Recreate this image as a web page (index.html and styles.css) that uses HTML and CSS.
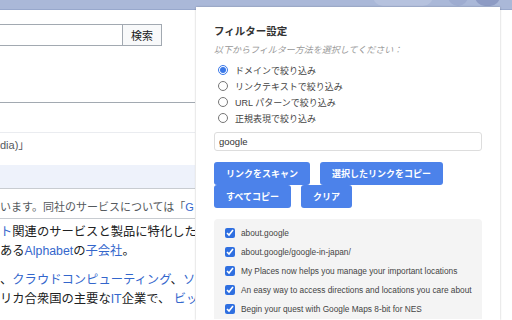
FILE: index.html
```html
<!DOCTYPE html>
<html lang="ja">
<head>
    <meta charset="UTF-8" />
    <meta name="viewport" content="width=device-width, initial-scale=1.0">
    <title>フィルター設定</title>
    <link rel="stylesheet" href="styles.css">
</head>
<body>
    <div class="topbar">
        <span class="pill"></span>
        <span class="dot"></span>
        <span class="dot dark"></span>
    </div>

    <div class="article">
        <div class="search">
            <input type="text" class="search-input" />
            <button class="search-btn">検索</button>
        </div>
        <div class="tabs"></div>
        <div class="tools"></div>
        <div class="caption">dia)」</div>
        <div class="band"></div>
        <div class="hatnote">います。同社のサービスについては「<a href="#">G</a></div>
        <p class="para"><a href="#">ト</a>関連のサービスと製品に特化した<br>ある<a href="#">Alphabet</a>の<a href="#">子会社</a>。</p>
        <p class="para">、<a href="#">クラウドコンピューティング</a>、<a href="#">ソ</a><br>リカ合衆国の主要な<a href="#">IT</a>企業で、 <a href="#">ビッ</a></p>
    </div>

    <div class="popup">
        <h2>フィルター設定</h2>
        <p class="hint">以下からフィルター方法を選択してください：</p>

        <div class="options">
            <label class="option"><input type="radio" name="mode" checked />ドメインで絞り込み</label>
            <label class="option"><input type="radio" name="mode" />リンクテキストで絞り込み</label>
            <label class="option"><input type="radio" name="mode" />URL パターンで絞り込み</label>
            <label class="option"><input type="radio" name="mode" />正規表現で絞り込み</label>
        </div>

        <input type="text" class="filter-input" value="google" />

        <div class="actions">
            <button class="btn">リンクをスキャン</button>
            <button class="btn">選択したリンクをコピー</button>
            <button class="btn">すべてコピー</button>
            <button class="btn">クリア</button>
        </div>

        <div class="links">
            <label class="link"><input type="checkbox" checked />about.google</label>
            <label class="link"><input type="checkbox" checked />about.google/google-in-japan/</label>
            <label class="link"><input type="checkbox" checked />My Places now helps you manage your important locations</label>
            <label class="link"><input type="checkbox" checked />An easy way to access directions and locations you care about</label>
            <label class="link"><input type="checkbox" checked />Begin your quest with Google Maps 8-bit for NES</label>
        </div>
    </div>
</body>
</html>
```

FILE: styles.css
```css
body {
    margin: 0;
    width: 512px;
    height: 320px;
    overflow: hidden;
    position: relative;
    background-color: #fff;
    font-family: "Liberation Sans", "Noto Sans CJK JP", sans-serif;
}

a {
    color: #3366cc;
    text-decoration: none;
}

/* barra superior del navegador */
.topbar {
    height: 9px;
    background-color: #aab8d8;
    border-bottom: 1px solid #98a8cc;
    display: flex;
    justify-content: flex-end;
    align-items: flex-start;
    padding-right: 12px;
}

.pill,
.dot {
    height: 20px;
    margin-top: -14px;
    background-color: #b6c2de;
    border-radius: 10px;
}

.pill {
    width: 60px;
    margin-right: 15px;
}

.dot {
    width: 20px;
    margin-right: 7px;
    background-color: #9eacd0;
}

.dot.dark {
    width: 25px;
    margin-right: 0;
    background-color: #8d9bc4;
}

/* articulo de fondo */
.article {
    width: 195px;
    height: 310px;
    overflow: hidden;
    white-space: nowrap;
    color: #202122;
}

.search {
    display: flex;
    margin-top: 14px;
    height: 22px;
}

.search-input {
    width: 123px;
    height: 22px;
    box-sizing: border-box;
    margin: 0;
    border: 1px solid #a2a9b1;
    border-left: none;
}

.search-btn {
    width: 40px;
    height: 22px;
    margin: 0 0 0 -1px;
    padding: 0;
    border: 1px solid #a2a9b1;
    background-color: #f8f9fa;
    color: #202122;
    font-family: inherit;
    font-size: 11px;
}

.tabs {
    height: 56px;
    border-bottom: 1px solid #a2a9b1;
}

.tools {
    height: 29px;
    border-bottom: 1px solid #eaecf0;
}

.caption {
    height: 32px;
    box-sizing: border-box;
    padding-top: 4px;
    font-size: 11px;
    line-height: 16px;
    color: #54595d;
}

.band {
    height: 23px;
    background-color: #eef2fb;
    border-bottom: 1px solid #c8ccd1;
}

.hatnote {
    height: 30px;
    box-sizing: border-box;
    padding-top: 10px;
    font-size: 11px;
    line-height: 16px;
    color: #54595d;
    border-bottom: 1px solid #c8ccd1;
}

.para {
    margin: 4px 0 10px;
    font-size: 12.3px;
    line-height: 19px;
}

/* ventana emergente de la extension */
.popup {
    position: absolute;
    left: 196px;
    top: 7px;
    bottom: 0;
    width: 304px;
    box-sizing: border-box;
    padding: 17px 18px 0;
    overflow: hidden;
    background-color: #fff;
    box-shadow: 0 0 2px rgba(0,0,0,0.25);
}

.popup h2 {
    margin: 0;
    font-size: 10.5px;
    line-height: 14px;
    font-weight: bold;
    color: #333;
}

.hint {
    margin: 6px 0 0;
    font-size: 9px;
    line-height: 12px;
    font-style: italic;
    color: #999;
}

.options {
    margin-top: 6px;
}

.option {
    display: flex;
    align-items: center;
    height: 16px;
    font-size: 9px;
    color: #444;
}

.option input {
    width: 10px;
    height: 10px;
    margin: 0 7px 0 4px;
    accent-color: #3a78e8;
}

.filter-input {
    display: block;
    margin-top: 6px;
    width: 268px;
    height: 19px;
    box-sizing: border-box;
    padding: 0 4px;
    border: 1px solid #ddd;
    border-radius: 3px;
    font-family: inherit;
    font-size: 9.5px;
    color: #333;
}

.actions {
    margin-top: 11px;
    width: 268px;
    display: flex;
    flex-wrap: wrap;
    column-gap: 10px;
}

.btn {
    height: 23px;
    padding: 0 12px;
    border: none;
    border-radius: 3px;
    background-color: #4c82ea;
    color: white;
    font-family: inherit;
    font-size: 9px;
    font-weight: bold;
}

.links {
    margin-top: 11px;
    height: 100px;
    box-sizing: border-box;
    padding: 4px 0 0 11px;
    background-color: #f4f4f4;
    border-radius: 4px 4px 0 0;
}

.link {
    display: flex;
    align-items: center;
    height: 19px;
    font-size: 8.3px;
    color: #444;
    white-space: nowrap;
}

.link input {
    width: 10px;
    height: 10px;
    margin: 0 6px 0 0;
    accent-color: #2f6fe0;
}
```
